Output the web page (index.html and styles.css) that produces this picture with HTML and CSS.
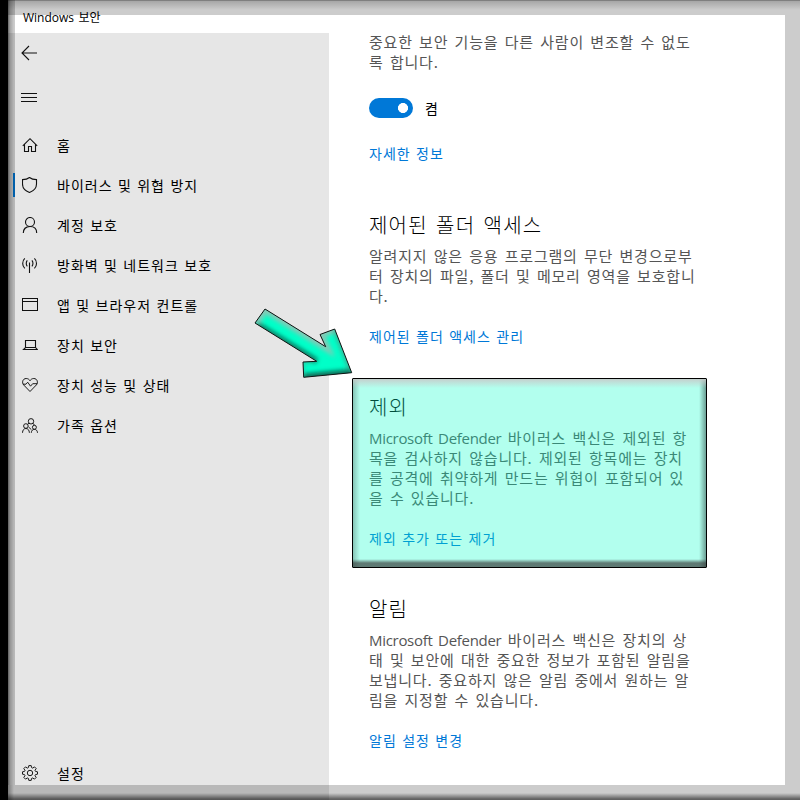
FILE: index.html
```html
<!DOCTYPE html>
<html lang="ko">
<head>
    <meta charset="UTF-8">
    <meta name="viewport" content="width=device-width, initial-scale=1.0">
    <title>Windows 보안</title>
    <link rel="stylesheet" href="styles.css">
</head>
<body>

<div class="window">
    <header class="titlebar"><span class="latin">Windows</span> 보안</header>

    <div class="layout">
        <nav class="sidebar">
            <div class="back">
                <svg class="icon" viewBox="0 0 16 16"><path d="M8 1L1 8l7 7M1 8h15"/></svg>
            </div>
            <div class="burger">
                <svg class="icon crisp" viewBox="0 0 16 16"><path d="M0 4.5h16M0 8.5h16M0 12.5h16"/></svg>
            </div>

            <ul class="menu">
                <li>
                    <svg class="icon" viewBox="0 0 16 16"><path d="M.8 8.8L8 1.700l7.200 7.100M2.500 7.500v7h4v-5h3v5h4v-7"/></svg>
                    홈
                </li>
                <li class="active">
                    <svg class="icon" viewBox="0 0 16 16"><path d="M7.500.5C5.500 2.100 3.200 2.600.5 2.600V7c0 4 2.700 6.900 7 8.500 4.300-1.600 7-4.500 7-8.500V2.600C11.800 2.600 9.500 2.100 7.500.5z"/></svg>
                    바이러스 및 위협 방지
                </li>
                <li>
                    <svg class="icon" viewBox="0 0 16 16"><circle cx="8" cy="5" r="4.500"/><path d="M1.300 16c0-4 2.700-6.500 6.700-6.500s6.700 2.500 6.700 6.500"/></svg>
                    계정 보호
                </li>
                <li>
                    <svg class="icon" viewBox="0 0 16 16"><path d="M7.500 5.500V16M5.300 3.300c-1.400 1.500-1.400 4.600 0 6.100M9.900 3.300c1.400 1.500 1.400 4.600 0 6.100M2.800 1.400c-2.800 2.600-2.800 7.400 0 10M12.400 1.400c2.800 2.600 2.800 7.400 0 10"/></svg>
                    방화벽 및 네트워크 보호
                </li>
                <li>
                    <svg class="icon crisp" viewBox="0 0 16 16"><path d="M.5 1.500h15v12H.5zM.5 4.500h15"/></svg>
                    앱 및 브라우저 컨트롤
                </li>
                <li>
                    <svg class="icon" viewBox="0 0 16 16"><path d="M3.500 10.500v-7h10v7M3.500 10.500h10l1.700 2H1.500z"/></svg>
                    장치 보안
                </li>
                <li>
                    <svg class="icon thin" viewBox="0 0 16 16"><path d="M8 14.500L1.600 7.900C-.4 5.500.7 1.500 4.200 1.500 6 1.500 7.300 2.500 8 3.700 8.700 2.500 10 1.500 11.800 1.500c3.500 0 4.600 4 2.600 6.400zM1 7.200h3l1.700-2 2.800 4 2.200-2.500h4.500"/></svg>
                    장치 성능 및 상태
                </li>
                <li>
                    <svg class="icon thin" viewBox="0 0 16 16"><circle cx="9" cy="4.300" r="2.700"/><circle cx="3.900" cy="9" r="2.300"/><circle cx="12.400" cy="10.300" r="2"/><path d="M.5 15.800c.1-2.700 1.400-4.300 3.400-4.300s3.400 1.600 3.500 4.300M9.300 15.800c.1-2.200 1.300-3.400 3.100-3.400s3 1.200 3.100 3.400M5.500 7.300l1.700-1.200M11 6.200l1.400 2M6.600 10l2.800 2.700"/></svg>
                    가족 옵션
                </li>
            </ul>

            <div class="settings">
                <svg class="icon thin" viewBox="0 0 16 16"><circle cx="8" cy="8" r="2.700"/><path d="M6.800.6h2.400l.4 2 1.100.5 1.800-1.200 1.700 1.700L13 5.300l.5 1.100 2 .4v2.400l-2 .4-.5 1.100 1.200 1.700-1.700 1.700-1.800-1.100-1.100.4-.4 2H6.800l-.4-2-1.100-.4-1.800 1.100-1.700-1.700L3 10.700l-.5-1.100-2-.4V6.800l2-.4L3 5.300 1.800 3.600l1.700-1.700 1.800 1.200 1.100-.5z"/></svg>
                설정
            </div>
        </nav>

        <main class="content">
            <section class="tamper">
                <p>중요한 보안 기능을 다른 사람이 변조할 수 없도<br>록 합니다.</p>
                <div class="toggle-row">
                    <span class="toggle"></span>
                    켬
                </div>
                <a class="link">자세한 정보</a>
            </section>

            <section class="folder">
                <h2>제어된 폴더 액세스</h2>
                <p>알려지지 않은 응용 프로그램의 무단 변경으로부<br>터 장치의 파일, 폴더 및 메모리 영역을 보호합니<br>다.</p>
                <a class="link">제어된 폴더 액세스 관리</a>
            </section>

            <section class="exclusion">
                <h2>제외</h2>
                <p><span class="latin">Microsoft Defender</span> 바이러스 백신은 제외된 항<br>목을 검사하지 않습니다. 제외된 항목에는 장치<br>를 공격에 취약하게 만드는 위협이 포함되어 있<br>을 수 있습니다.</p>
                <a class="link">제외 추가 또는 제거</a>
            </section>

            <section class="alerts">
                <h2>알림</h2>
                <p><span class="latin">Microsoft Defender</span> 바이러스 백신은 장치의 상<br>태 및 보안에 대한 중요한 정보가 포함된 알림을<br>보냅니다. 중요하지 않은 알림 중에서 원하는 알<br>림을 지정할 수 있습니다.</p>
                <a class="link">알림 설정 변경</a>
            </section>
        </main>
    </div>

    <!-- callout over the exclusions section -->
    <div class="highlight"></div>
    <svg class="arrow" viewBox="250 300 110 85">
        <defs>
            <clipPath id="shape"><path d="M265 309L325.700 346.700 320 334.500 334.700 329 351.700 372.700 303.700 377.300 303 362 316.700 361.300 255 323z"/></clipPath>
            <filter id="soft" x="-30%" y="-30%" width="160%" height="160%"><feGaussianBlur stdDeviation="2"/></filter>
        </defs>
        <g clip-path="url(#shape)">
            <rect x="250" y="300" width="110" height="85" fill="#00ffc8"/>
            <g fill="none" filter="url(#soft)">
                <path d="M255 323L265 309 325.700 346.700 320 334.500 334.700 329" stroke="#83c9b6" stroke-width="8"/>
                <path d="M334.700 329L351.700 372.700" stroke="#3eac91" stroke-width="4"/>
                <path d="M257 324.500L316.700 361.300" stroke="#087960" stroke-width="6"/>
                <path d="M303 378L351.700 373.500" stroke="#08705a" stroke-width="9"/>
                <path d="M303 377V362h10" stroke="#39b497" stroke-width="2"/>
            </g>
        </g>
        <path class="outline" d="M265 309L325.700 346.700 320 334.500 334.700 329 351.700 372.700 303.700 377.300 303 362 316.700 361.300 255 323z"/>
    </svg>

    <div class="frame frame-top"></div>
    <div class="frame frame-left"></div>
    <div class="frame frame-right"></div>
    <div class="frame frame-bottom"></div>
</div>

</body>
</html>
```

FILE: styles.css
```css
* {
    box-sizing: border-box;
}
body {
    margin: 0;
    font-family: "Noto Sans CJK KR", sans-serif;
    font-size: 14px;
    line-height: 20px;
    color: #000;
    background: #fff;
}
.window {
    position: relative;
    width: 800px;
    height: 800px;
    overflow: hidden;
    background: #fff;
}
.latin {
    font-family: "Open Sans", sans-serif;
}
.titlebar {
    height: 33px;
    padding: 7px 0 0 23px;
    font-size: 12px;
    word-spacing: 1px;
}
.layout {
    display: flex;
    height: 767px;
}

/* sidebar */
.sidebar {
    display: flex;
    flex-direction: column;
    width: 329px;
    padding-left: 13px;
    background: #e6e6e6;
    letter-spacing: 1px;
    word-spacing: 0.5px;
}
.icon {
    flex: none;
    width: 16px;
    height: 16px;
    fill: none;
    stroke: #111;
    stroke-width: 1.1;
}
.thin {
    stroke-width: 0.95;
}
.crisp {
    shape-rendering: crispEdges;
    stroke-width: 1;
}
.back,
.burger {
    display: flex;
    padding-left: 8px;
}
.back {
    padding-top: 12px;
}
.burger {
    padding-top: 28px;
}
.menu {
    margin: 20px 0 0;
    padding: 0;
    list-style: none;
}
.menu li,
.settings {
    display: flex;
    align-items: center;
    gap: 19px;
    height: 40px;
    padding-left: 9px;
}
.menu .active {
    background: linear-gradient(#0078d7, #0078d7) 0 8px / 2px 24px no-repeat;
}
.settings {
    margin-top: auto;
    margin-bottom: 7px;
}

/* content */
.content {
    padding-left: 40px;
}
.content p {
    margin: 0;
    font-size: 15px;
    line-height: 20px;
    letter-spacing: 0.8px;
    word-spacing: 1.3px;
    white-space: nowrap;
    color: #555;
}
.content .latin {
    letter-spacing: -0.3px;
    word-spacing: 2px;
}
.content h2 {
    margin: 0 0 7px;
    font-size: 20px;
    font-weight: 300;
    line-height: 28px;
    letter-spacing: 1.2px;
    word-spacing: 1.5px;
}
.link {
    display: block;
    letter-spacing: 1px;
    word-spacing: 0.5px;
    color: #0078d7;
}
.tamper {
    height: 179px;
    margin-top: -1px;
}
.toggle-row {
    display: flex;
    align-items: center;
    gap: 12px;
    margin: 26px 0 25px;
}
.toggle {
    width: 44px;
    height: 20px;
    border-radius: 10px;
    background: radial-gradient(circle at 34px 10px, #fff 4.700px, #0078d7 5.300px);
}
.folder {
    height: 182px;
}
.exclusion {
    height: 202px;
}
.folder .link,
.exclusion .link,
.alerts .link {
    margin-top: 20px;
}

/* callout */
.highlight {
    position: absolute;
    left: 352px;
    top: 378px;
    width: 355px;
    height: 190px;
    border: 1px solid #000;
    border-radius: 1px;
    background:
        linear-gradient(to top, rgba(50, 50, 50, 0.65) 4px, rgba(50, 60, 60, 0) 8px),
        linear-gradient(to bottom, rgba(200, 200, 200, 0.85), rgba(200, 200, 200, 0) 9px),
        linear-gradient(to right, rgba(70, 110, 100, 0.4), rgba(70, 110, 100, 0) 7px),
        linear-gradient(to left, rgba(50, 80, 75, 0.55), rgba(50, 80, 75, 0) 7px),
        rgba(0, 255, 200, 0.3);
}
.arrow {
    position: absolute;
    left: 250px;
    top: 300px;
    width: 110px;
    height: 85px;
}
.outline {
    fill: none;
    stroke: #111;
    stroke-width: 1;
}

/* translucent bevelled frame */
.frame {
    position: absolute;
    background: rgba(0, 0, 0, 0.2);
}
.frame-top {
    left: 8px;
    right: 0;
    top: 0;
    height: 15px;
    background: linear-gradient(rgba(0, 0, 0, 0.5) 1px, rgba(0, 0, 0, 0.35) 1px, rgba(0, 0, 0, 0.2) 10px);
}
.frame-left {
    left: 0;
    top: 0;
    width: 15px;
    height: 785px;
    background: linear-gradient(to right, #000 8px, rgba(0, 0, 0, 0.6) 8px, rgba(0, 0, 0, 0.36) 10px, rgba(0, 0, 0, 0.2) 14px);
}
.frame-right {
    right: 0;
    top: 15px;
    width: 15px;
    height: 770px;
}
.frame-bottom {
    left: 0;
    right: 0;
    bottom: 0;
    height: 15px;
    background:
        linear-gradient(to right, #000 8px, rgba(0, 0, 0, 0.35) 8px, rgba(0, 0, 0, 0) 14px),
        linear-gradient(rgba(0, 0, 0, 0.2) 8px, rgba(0, 0, 0, 0.62) 14px);
}
```
